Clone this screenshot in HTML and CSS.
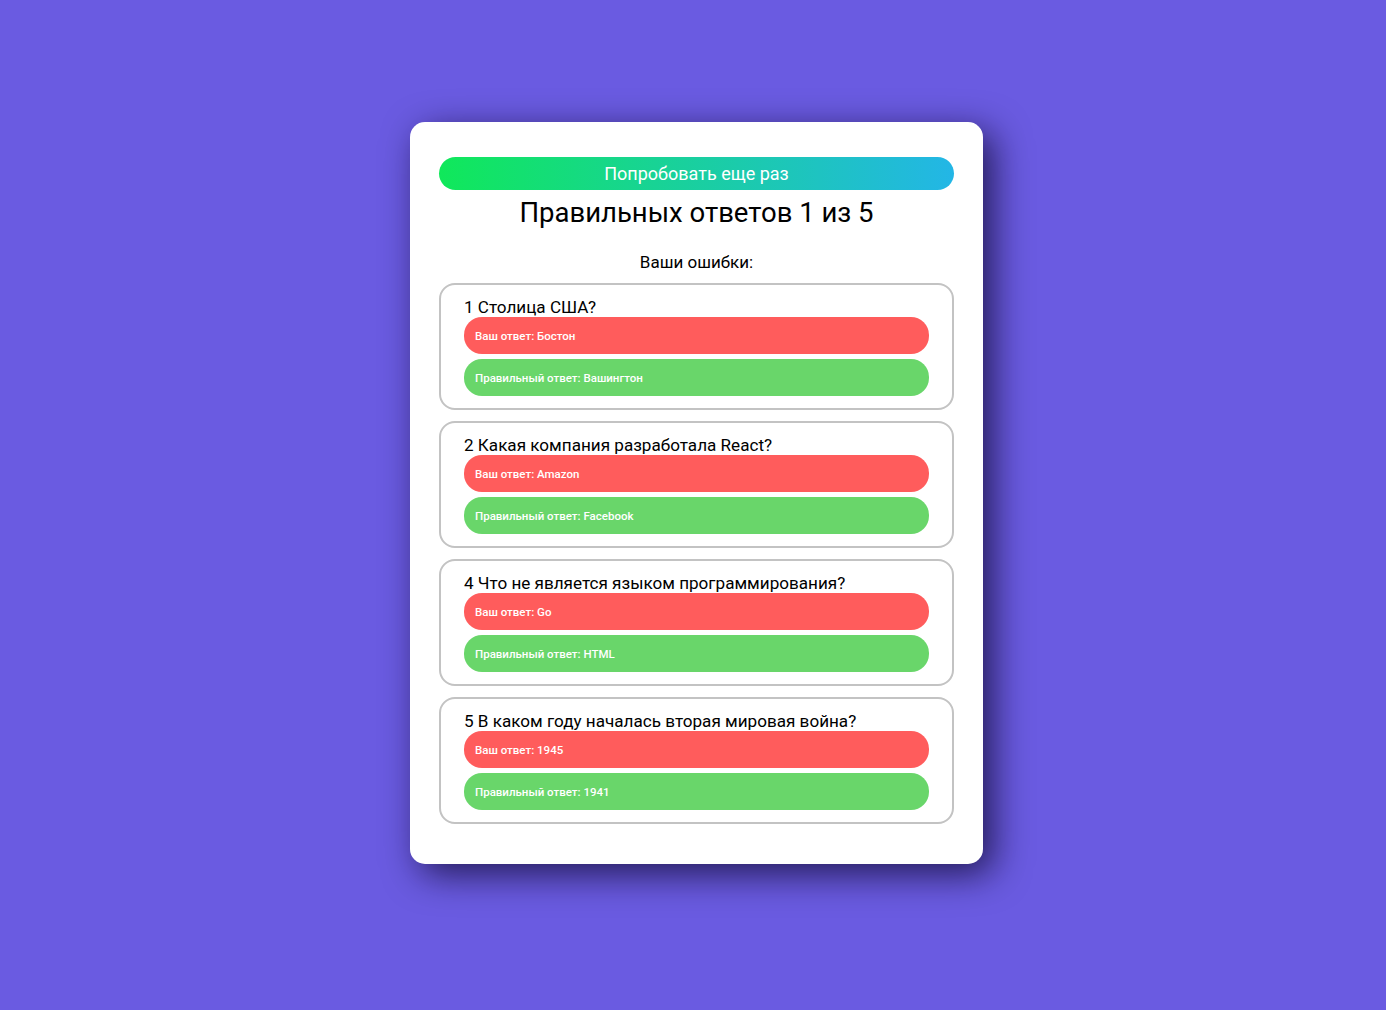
FILE: index.html
```html
<!DOCTYPE html>
<html lang="ru">
<head>
<meta charset="utf-8">
<title>Результаты</title>
<link rel="stylesheet" href="styles.css">
</head>
<body>
<div class="page">
  <div class="card">
    <button class="retry">Попробовать еще раз</button>
    <h1 class="score">Правильных ответов 1 из 5</h1>
    <p class="errors-title">Ваши ошибки:</p>
    <div class="list">
      <div class="item">
        <div class="question">1 Столица США?</div>
        <div class="answer wrong">Ваш ответ: Бостон</div>
        <div class="answer right">Правильный ответ: Вашингтон</div>
      </div>
      <div class="item">
        <div class="question">2 Какая компания разработала React?</div>
        <div class="answer wrong">Ваш ответ: Amazon</div>
        <div class="answer right">Правильный ответ: Facebook</div>
      </div>
      <div class="item">
        <div class="question">4 Что не является языком программирования?</div>
        <div class="answer wrong">Ваш ответ: Go</div>
        <div class="answer right">Правильный ответ: HTML</div>
      </div>
      <div class="item">
        <div class="question">5 В каком году началась вторая мировая война?</div>
        <div class="answer wrong">Ваш ответ: 1945</div>
        <div class="answer right">Правильный ответ: 1941</div>
      </div>
    </div>
  </div>
</div>
</body>
</html>
```
FILE: styles.css
```css
* { box-sizing: border-box; }
html, body { margin: 0; padding: 0; }
body {
  background: #6a5be1;
  font-family: Roboto, "Liberation Sans", Arial, sans-serif;
  color: #000;
  height: 1010px;
}
.page {
  display: flex;
  justify-content: center;
  align-items: flex-start;
  padding-top: 122px;
  padding-left: 7px;
}
.card {
  width: 573px;
  height: 742px;
  background: #fff;
  border-radius: 15px;
  padding: 35px 29px 0;
  box-shadow: 10px 10px 36px rgba(12, 6, 40, 0.75);
}
.retry {
  display: block;
  width: 100%;
  height: 33px;
  border: none;
  border-radius: 17px;
  background: linear-gradient(90deg, #10e85a 0%, #23b6e6 100%);
  color: #fff;
  font-family: Roboto, "Liberation Sans", Arial, sans-serif;
  font-size: 18px;
  padding: 0;
  margin: 0;
  line-height: 33px;
}
.score {
  font-size: 27.5px;
  font-weight: 400;
  text-align: center;
  margin: 6px 0 0;
  line-height: 34px;
}
.errors-title {
  font-size: 17px;
  text-align: center;
  margin: 22px 0 0;
  line-height: 20px;
}
.list {
  display: flex;
  flex-direction: column;
  gap: 11px;
  margin-top: 11px;
}
.item {
  border: 2px solid #c3c3c3;
  border-radius: 16px;
  padding: 12px 23px 12px;
  display: flex;
  flex-direction: column;
}
.question {
  font-size: 17.1px;
  line-height: 20px;
  margin-bottom: 0;
}
.answer {
  height: 37px;
  border-radius: 18px;
  color: #fff;
  font-size: 11.5px;
  font-weight: 500;
  padding-left: 11px;
  display: flex;
  align-items: center;
}
.answer + .answer { margin-top: 5px; }
.wrong { background: #ff5c5c; }
.right { background: #69d66a; }
```
